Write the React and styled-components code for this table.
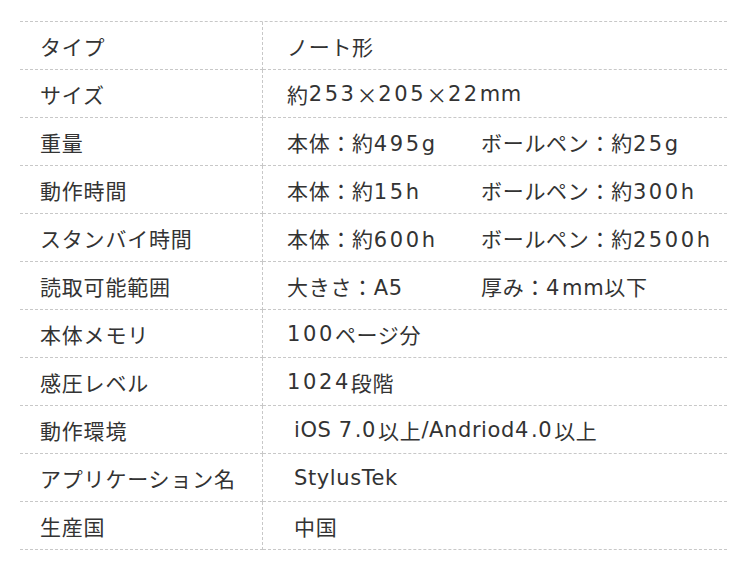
import React from "react";
import styled, { createGlobalStyle } from "styled-components";

const Global = createGlobalStyle`
  html, body { margin: 0; padding: 0; background: #fff; }
  body { font-family: "Noto Sans CJK JP", "Noto Sans", sans-serif; color: #333; }
`;

const Wrap = styled.div`
  padding: 21px 23px 0 20px;
`;

const Table = styled.div`
  display: grid;
  grid-template-columns: 243px 1fr;
  border-top: 1px dashed #c8c8c8;
`;

const Label = styled.div`
  height: 47px;
  display: flex;
  align-items: center;
  padding-left: 20px;
  font-size: 21px;
  letter-spacing: 0.8px;
  border-bottom: 1px dashed #c8c8c8;
  border-right: 1px dashed #c8c8c8;
  color: #333;
`;

const Value = styled.div`
  height: 47px;
  display: flex;
  align-items: center;
  padding-left: ${(p) => (p.$indent ? 31 : 24)}px;
  font-size: 21px;
  letter-spacing: 0.7px;
  border-bottom: 1px dashed #c8c8c8;
  color: #333;
  white-space: pre;
`;

const Part = styled.span`
  display: inline-block;
  width: 194px;
`;

const Latin = styled.span`
  font-family: "DejaVu Sans", "Noto Sans CJK JP", sans-serif;
  font-size: 21px;
  letter-spacing: 0.6px;
`;

const Num = styled.span`
  font-family: "DejaVu Sans", "Noto Sans CJK JP", sans-serif;
  font-size: 21px;
  letter-spacing: 2.6px;
`;

function Rich({ text }) {
  const parts = text.split(/([0-9]+|[A-Za-z .\/]+)/).filter(Boolean);
  return parts.map((p, i) =>
    /^[0-9]+$/.test(p) ? (
      <Num key={i}>{p}</Num>
    ) : /^[A-Za-z .\/]+$/.test(p) ? (
      <Latin key={i}>{p}</Latin>
    ) : (
      <React.Fragment key={i}>{p}</React.Fragment>
    )
  );
}

const rows = [
  ["タイプ", ["ノート形"]],
  ["サイズ", ["約253×205×22mm"]],
  ["重量", ["本体：約495g", "ボールペン：約25g"]],
  ["動作時間", ["本体：約15h", "ボールペン：約300h"]],
  ["スタンバイ時間", ["本体：約600h", "ボールペン：約2500h"]],
  ["読取可能範囲", ["大きさ：A5", "厚み：4mm以下"]],
  ["本体メモリ", ["100ページ分"]],
  ["感圧レベル", ["1024段階"]],
  ["動作環境", ["iOS 7.0以上/Andriod4.0以上"], true],
  ["アプリケーション名", ["StylusTek"], true],
  ["生産国", ["中国"], true],
];

export default function App() {
  return (
    <>
      <Global />
      <Wrap>
        <Table>
          {rows.map(([label, vals, indent]) => (
            <React.Fragment key={label}>
              <Label>{label}</Label>
              <Value $indent={indent}>
                {vals.length > 1 ? (
                  <>
                    <Part>
                      <Rich text={vals[0]} />
                    </Part>
                    <span>
                      <Rich text={vals[1]} />
                    </span>
                  </>
                ) : (
                  <Rich text={vals[0]} />
                )}
              </Value>
            </React.Fragment>
          ))}
        </Table>
      </Wrap>
    </>
  );
}
